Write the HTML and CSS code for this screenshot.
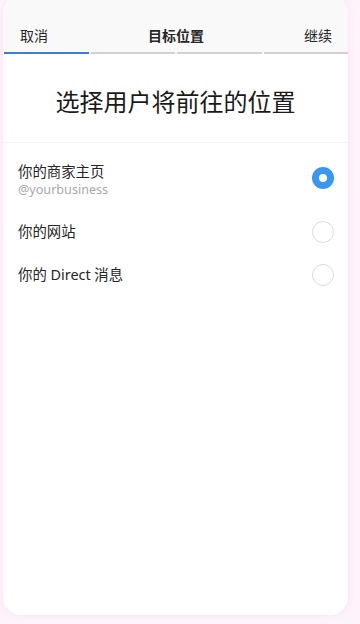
FILE: index.html
```html
<!DOCTYPE html>
<html lang="zh">
<head>
<meta charset="utf-8">
<link rel="stylesheet" href="styles.css">
</head>
<body>
<div class="card">
  <div class="top">
    <div class="nav">
      <span class="cancel">取消</span>
      <span class="ttl">目标位置</span>
      <span class="next">继续</span>
    </div>
    <div class="progress">
      <span class="seg on"></span><span class="seg"></span><span class="seg"></span><span class="seg"></span>
    </div>
  </div>
  <h1 class="heading">选择用户将前往的位置</h1>
  <div class="list">
    <div class="row r1">
      <div class="txt shift">
        <div class="main">你的商家主页</div>
        <div class="sub">@yourbusiness</div>
      </div>
      <span class="radio sel"></span>
    </div>
    <div class="row">
      <div class="txt"><div class="main">你的网站</div></div>
      <span class="radio"></span>
    </div>
    <div class="row">
      <div class="txt"><div class="main">你的 Direct 消息</div></div>
      <span class="radio"></span>
    </div>
  </div>
</div>
</body>
</html>
```
FILE: styles.css
```css
html, body {
  margin: 0;
  padding: 0;
  background: #fdf3fa;
  font-family: "Noto Sans", "Noto Sans CJK SC", sans-serif;
  color: #262626;
}
body {
  width: 360px;
  height: 624px;
  overflow: hidden;
}
.card {
  margin: -5px 0 0 3px;
  width: 345px;
  height: 620px;
  background: #fff;
  border-radius: 18px;
  box-shadow: 0 0 6px rgba(240, 200, 230, 0.35);
  overflow: hidden;
  display: flex;
  flex-direction: column;
}
.top {
  background: #f9f9f9;
  padding-top: 5px;
}
.nav {
  height: 52px;
  display: flex;
  align-items: center;
  justify-content: space-between;
  padding: 18px 16px 0 17px;
  font-size: 14px;
  box-sizing: border-box;
}
.ttl {
  font-weight: 700;
}
.progress {
  display: flex;
  gap: 2px;
  padding: 0 0 0 1px;
}
.seg {
  flex: 1;
  height: 2px;
  background: #d2d3d6;
}
.seg.on {
  background: #3a7fd5;
}
.heading {
  margin: 0;
  font-size: 24px;
  font-weight: 400;
  color: #1a1a1a;
  text-align: center;
  padding: 31px 0 0;
  height: 57px;
  line-height: 33px;
  border-bottom: 1px solid #f4f4f4;
  box-sizing: content-box;
}
.list {
  padding: 13px 14px 0 15px;
  display: flex;
  flex-direction: column;
}
.row {
  display: flex;
  align-items: center;
  justify-content: space-between;
  height: 43px;
}
.row.r1 {
  height: 44px;
  margin-bottom: 10px;
}
.txt.shift {
  padding-top: 4px;
}
.main {
  font-size: 14.4px;
  line-height: 20px;
}
.sub {
  font-size: 12.6px;
  color: #a8a8a8;
  line-height: 16px;
}
.radio {
  width: 22px;
  height: 22px;
  border-radius: 50%;
  border: 1.5px solid #dbdbdb;
  box-sizing: border-box;
  flex: none;
}
.radio.sel {
  border: 7.5px solid #3897f0;
  background: #fff;
}
```
